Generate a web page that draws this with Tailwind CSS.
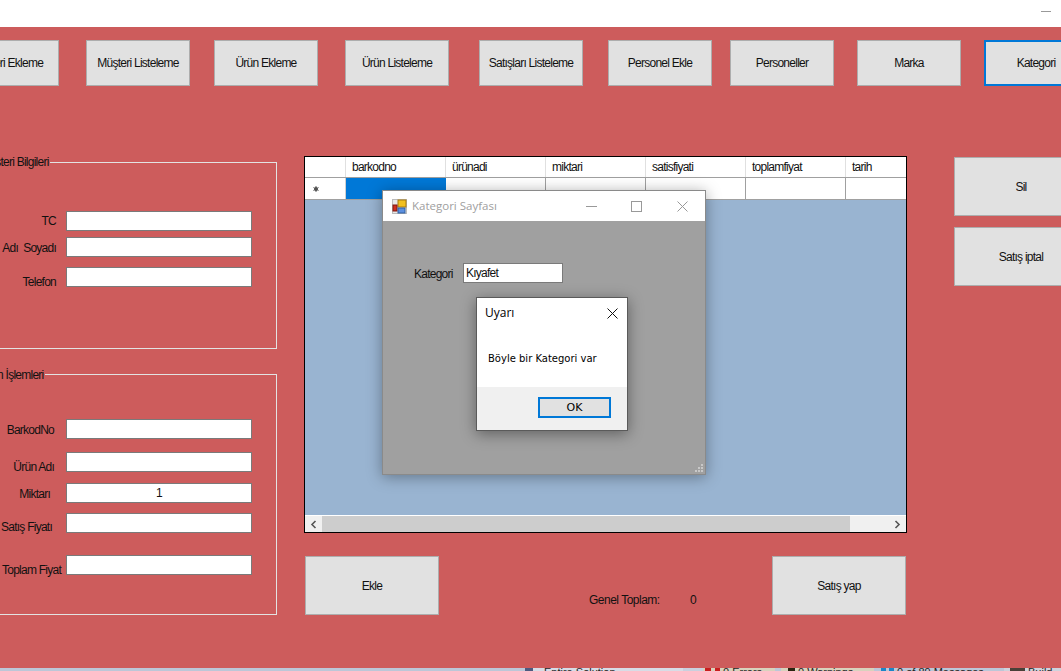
<!DOCTYPE html>
<html lang="en">
<head>
  <meta charset="UTF-8">
  <meta name="viewport" content="width=device-width, initial-scale=1">
  <title>Satış</title>
  <script src="https://cdn.jsdelivr.net/npm/@tailwindcss/browser@4"></script>
</head>
<body class="bg-white overflow-hidden">
  <div class="relative w-[1061px] h-[671px] overflow-hidden font-['Liberation_Sans',sans-serif] text-[12px] tracking-[-0.75px] text-[#111]">

    <!-- title bar -->
    <div class="h-[27px] bg-white flex justify-end">
      <div class="w-[10px] h-px bg-[#999] mt-[11px] mr-[10px]"></div>
    </div>

    <!-- form -->
    <div class="h-[641px] bg-[#cd5c5c] overflow-hidden">
      <div class="flex mt-[13px] ml-[-45px] w-[1200px] h-[46px] pt-[13px]">
        <button class="w-[104px] h-[46px] mt-[-13px] bg-[#e1e1e1] border border-[#adadad]">Müşteri Ekleme</button>
        <button class="w-[104px] h-[46px] mt-[-13px] ml-[27px] bg-[#e1e1e1] border border-[#adadad]">Müşteri Listeleme</button>
        <button class="w-[104px] h-[46px] mt-[-13px] ml-[24px] bg-[#e1e1e1] border border-[#adadad]">Ürün Ekleme</button>
        <button class="w-[104px] h-[46px] mt-[-13px] ml-[27px] bg-[#e1e1e1] border border-[#adadad]">Ürün Listeleme</button>
        <button class="w-[104px] h-[46px] mt-[-13px] ml-[30px] bg-[#e1e1e1] border border-[#adadad]">Satışları Listeleme</button>
        <button class="w-[104px] h-[46px] mt-[-13px] ml-[25px] bg-[#e1e1e1] border border-[#adadad]">Personel Ekle</button>
        <button class="w-[104px] h-[46px] mt-[-13px] ml-[18px] bg-[#e1e1e1] border border-[#adadad]">Personeller</button>
        <button class="w-[104px] h-[46px] mt-[-13px] ml-[23px] bg-[#e1e1e1] border border-[#adadad]">Marka</button>
        <button class="w-[104px] h-[46px] mt-[-13px] ml-[23px] bg-[#e1e1e1] border-2 border-[#0078d7]">Kategori</button>
      </div>

      <div class="flex mt-[70px]">
        <!-- left column -->
        <div class="w-[277px] shrink-0 flex flex-col">
          <div class="relative h-[187px] mt-[6px] ml-[-20px] border border-[#e3e3e3] pt-[48px]">
            <span class="absolute top-[-8px] left-[-5px] bg-[#cd5c5c] pl-[4px] pr-[1px] leading-[14px] whitespace-nowrap">Müşteri Bilgileri</span>
            <div class="flex h-[20px]">
              <label class="w-[75px] text-right mt-[1px]">TC</label>
              <div class="w-[186px] ml-[10px] bg-white border border-[#7a7a7a]"></div>
            </div>
            <div class="flex h-[20px] mt-[6px]">
              <label class="w-[75px] text-right mt-[2px] whitespace-pre">Adı  Soyadı</label>
              <div class="w-[186px] ml-[10px] bg-white border border-[#7a7a7a]"></div>
            </div>
            <div class="flex h-[20px] mt-[10px]">
              <label class="w-[75px] text-right mt-[6px]">Telefon</label>
              <div class="w-[186px] ml-[10px] bg-white border border-[#7a7a7a]"></div>
            </div>
          </div>

          <div class="relative h-[241px] mt-[25px] ml-[-20px] border border-[#e3e3e3] pt-[44px]">
            <span class="absolute top-[-7px] left-[-5px] bg-[#cd5c5c] pl-[4px] pr-[1px] leading-[14px] whitespace-nowrap">Ürün İşlemleri</span>
            <div class="flex h-[20px]">
              <label class="w-[75px] pr-[2px] text-right mt-[2px]">BarkodNo</label>
              <div class="w-[186px] ml-[10px] bg-white border border-[#7a7a7a]"></div>
            </div>
            <div class="flex h-[20px] mt-[13px]">
              <label class="w-[75px] pr-[2px] text-right mt-[6px]">Ürün Adı</label>
              <div class="w-[186px] ml-[10px] bg-white border border-[#7a7a7a]"></div>
            </div>
            <div class="flex h-[20px] mt-[11px]">
              <label class="w-[75px] pr-[6px] text-right mt-[2px]">Miktarı</label>
              <div class="w-[186px] ml-[10px] bg-white border border-[#7a7a7a] text-center leading-[19px]">1</div>
            </div>
            <div class="flex h-[20px] mt-[10px]">
              <label class="w-[75px] pr-[4px] text-right mt-[5px]">Satış Fiyatı</label>
              <div class="w-[186px] ml-[10px] bg-white border border-[#7a7a7a]"></div>
            </div>
            <div class="flex h-[20px] mt-[22px]">
              <label class="w-[85px] pr-[5px] text-right mt-[6px] whitespace-nowrap">Toplam Fiyat</label>
              <div class="w-[186px] bg-white border border-[#7a7a7a]"></div>
            </div>
          </div>
        </div>

        <!-- middle column -->
        <div class="w-[603px] ml-[27px] shrink-0">
          <div class="h-[377px] border border-black bg-[#99b4d1] flex flex-col">
            <div class="flex h-[21px] bg-white border-b border-[#a0a0a0] leading-[21px] text-[#111]">
              <div class="w-[41px] border-r border-[#e0e0e0]"></div>
              <div class="w-[100px] pl-[6px] border-r border-[#e0e0e0]">barkodno</div>
              <div class="w-[100px] pl-[6px] border-r border-[#e0e0e0]">ürünadi</div>
              <div class="w-[100px] pl-[6px] border-r border-[#e0e0e0]">miktari</div>
              <div class="w-[100px] pl-[6px] border-r border-[#e0e0e0]">satisfiyati</div>
              <div class="w-[100px] pl-[6px] border-r border-[#e0e0e0]">toplamfiyat</div>
              <div class="flex-1 pl-[6px]">tarih</div>
            </div>
            <div class="flex h-[22px] bg-white border-b border-[#a0a0a0]">
              <div class="w-[41px] border-r border-[#d0d0d0] flex items-center pl-[8px]">
                <svg width="6" height="6" viewBox="0 0 6 6" fill="#444" stroke="#555" stroke-width="0.9"><circle cx="3" cy="3" r="1.6"/><path d="M3 0v6M0.4 1.5l5.2 3M0.4 4.5l5.2-3"/></svg>
              </div>
              <div class="w-[100px] bg-[#0078d7]"></div>
              <div class="w-[100px] border-r border-[#a0a0a0]"></div>
              <div class="w-[100px] border-r border-[#a0a0a0]"></div>
              <div class="w-[100px] border-r border-[#a0a0a0]"></div>
              <div class="w-[100px] border-r border-[#a0a0a0]"></div>
              <div class="flex-1"></div>
            </div>
            <div class="flex-1"></div>
            <div class="flex h-[16px] bg-[#f0f0f0] border-t border-white box-content items-center">
              <div class="w-[17px] flex justify-center">
                <svg width="7" height="9" viewBox="0 0 7 9" fill="none" stroke="#555" stroke-width="1.6"><path d="M5.5 1L2 4.5 5.5 8"/></svg>
              </div>
              <div class="w-[528px] h-full bg-[#cdcdcd]"></div>
              <div class="flex-1 flex justify-end pr-[5px]">
                <svg width="7" height="9" viewBox="0 0 7 9" fill="none" stroke="#555" stroke-width="1.6"><path d="M1.5 1L5 4.5 1.5 8"/></svg>
              </div>
            </div>
          </div>
          <div class="flex mt-[23px] pl-[1px] pr-[1px]">
            <button class="w-[134px] h-[59px] bg-[#e1e1e1] border border-[#adadad]">Ekle</button>
            <div class="w-[150px] ml-[150px] mt-[35px] flex">
              <span class="w-[70px] whitespace-nowrap tracking-[-0.5px]">Genel Toplam:</span>
              <span class="ml-[31px]">0</span>
            </div>
            <button class="w-[134px] h-[59px] ml-auto bg-[#e1e1e1] border border-[#adadad]">Satış yap</button>
          </div>
        </div>

        <!-- right column -->
        <div class="ml-[47px] shrink-0 flex flex-col gap-[11px] mt-[1px]">
          <button class="w-[134px] h-[59px] bg-[#e1e1e1] border border-[#adadad]">Sil</button>
          <button class="w-[134px] h-[59px] bg-[#e1e1e1] border border-[#adadad]">Satış iptal</button>
        </div>
      </div>
    </div>

    <!-- visual studio behind the form -->
    <div class="h-[3px] bg-[#bcc7d8] overflow-hidden flex text-[#222] text-[11px] tracking-normal leading-[9px]">
      <div class="w-[525px]"></div>
      <div class="w-[8px] bg-[#4d5a80]"></div>
      <div class="w-[150px] pl-[11px] bg-[#d7dce6] whitespace-nowrap">Entire Solution</div>
      <div class="w-[20px] bg-[#c9d0de]"></div>
      <div class="w-[72px] bg-[#d8d2bd] whitespace-nowrap flex">
        <span class="w-[6px] ml-[2px] bg-[#c81e1e]"></span>
        <span class="w-[5px] ml-[4px] mr-[3px] bg-[#c81e1e]"></span>
        <span>0 Errors</span>
      </div>
      <div class="w-[93px] ml-[6px] bg-[#d8d2bd] whitespace-nowrap flex">
        <span class="w-[7px] ml-[7px] mr-[3px] bg-[#2a2410]"></span>
        <span>0 Warnings</span>
      </div>
      <div class="w-[124px] ml-[6px] bg-[#bcc7d8] whitespace-nowrap flex">
        <span class="w-[5px] ml-[1px] bg-[#1c86c8]"></span>
        <span class="w-[5px] ml-[3px] mr-[3px] bg-[#1c86c8]"></span>
        <span>0 of 89 Messages</span>
      </div>
      <div class="flex-1 bg-[#cfd3dc] whitespace-nowrap flex">
        <span class="w-[15px] ml-[6px] mr-[3px] bg-[#4a4038]"></span>
        <span>Build</span>
      </div>
    </div>

    <!-- Kategori Sayfası window -->
    <div class="absolute left-[382px] top-[190px] w-[324px] h-[285px] bg-[#a0a0a0] border border-[#8a8a8a] shadow-[0_2px_14px_rgba(0,0,0,0.35)] flex flex-col">
      <div class="h-[30px] bg-white flex items-center text-[#a0a0a0] font-['Open_Sans',sans-serif] text-[11.5px] tracking-normal">
        <svg class="ml-[9px]" width="15" height="15" viewBox="0 0 15 15">
          <rect x="0.5" y="0.5" width="14" height="14" fill="#e8e8e8" stroke="#bbb"/>
          <rect x="6" y="1" width="8" height="7" fill="#f2c020" stroke="#a87a10"/>
          <rect x="1" y="6" width="4" height="6" fill="#d03020" stroke="#801810"/>
          <rect x="6" y="9" width="7" height="5" fill="#5c90e0" stroke="#3060a0"/>
        </svg>
        <span class="ml-[5px] w-[84px] whitespace-nowrap">Kategori Sayfası</span>
        <svg class="ml-[90px]" width="11" height="11" viewBox="0 0 11 11" stroke="#999" fill="none"><path d="M0 5.5h11"/></svg>
        <svg class="ml-[34px]" width="11" height="11" viewBox="0 0 11 11" stroke="#999" fill="none"><rect x="0.5" y="0.5" width="10" height="10"/></svg>
        <svg class="ml-[35px]" width="11" height="11" viewBox="0 0 11 11" stroke="#999" fill="none"><path d="M0.5 0.5l10 10M10.5 0.5l-10 10"/></svg>
      </div>
      <div class="flex mt-[42px]">
        <label class="ml-[31px] w-[49px] mt-[2px]">Kategori</label>
        <div class="w-[100px] h-[20px] bg-white border border-[#7a7a7a] pl-[2px] leading-[18px]">Kıyafet</div>
      </div>
      <svg class="absolute right-[1px] bottom-[1px]" width="9" height="9" viewBox="0 0 9 9" fill="#c8c8c8"><rect x="6" y="0" width="2" height="2"/><rect x="3" y="3" width="2" height="2"/><rect x="6" y="3" width="2" height="2"/><rect x="0" y="6" width="2" height="2"/><rect x="3" y="6" width="2" height="2"/><rect x="6" y="6" width="2" height="2"/></svg>
    </div>

    <!-- Uyarı message box -->
    <div class="absolute left-[476px] top-[297px] w-[152px] h-[134px] bg-white border border-[#5a5a5a] shadow-[0_3px_14px_rgba(0,0,0,0.4)] flex flex-col font-['Open_Sans',sans-serif] tracking-normal text-black">
      <div class="flex items-center h-[30px] pl-[8px] pr-[9px] justify-between text-[12px]">
        <span>Uyarı</span>
        <svg width="11" height="11" viewBox="0 0 11 11" stroke="#111" fill="none"><path d="M0.5 0.5l10 10M10.5 0.5l-10 10"/></svg>
      </div>
      <div class="h-[59px] pl-[11px] pt-[24px] text-[10px] font-['DejaVu_Sans',sans-serif] leading-[14px]">Böyle bir Kategori var</div>
      <div class="flex-1 bg-[#f0f0f0] flex justify-end items-start pt-[10px] pr-[16px]">
        <div class="w-[73px] h-[21px] bg-[#e1e1e1] border-2 border-[#0078d7] flex items-center justify-center pt-[1px] text-[11px] font-['DejaVu_Sans',sans-serif]">OK</div>
      </div>
    </div>
  </div>
</body>
</html>
